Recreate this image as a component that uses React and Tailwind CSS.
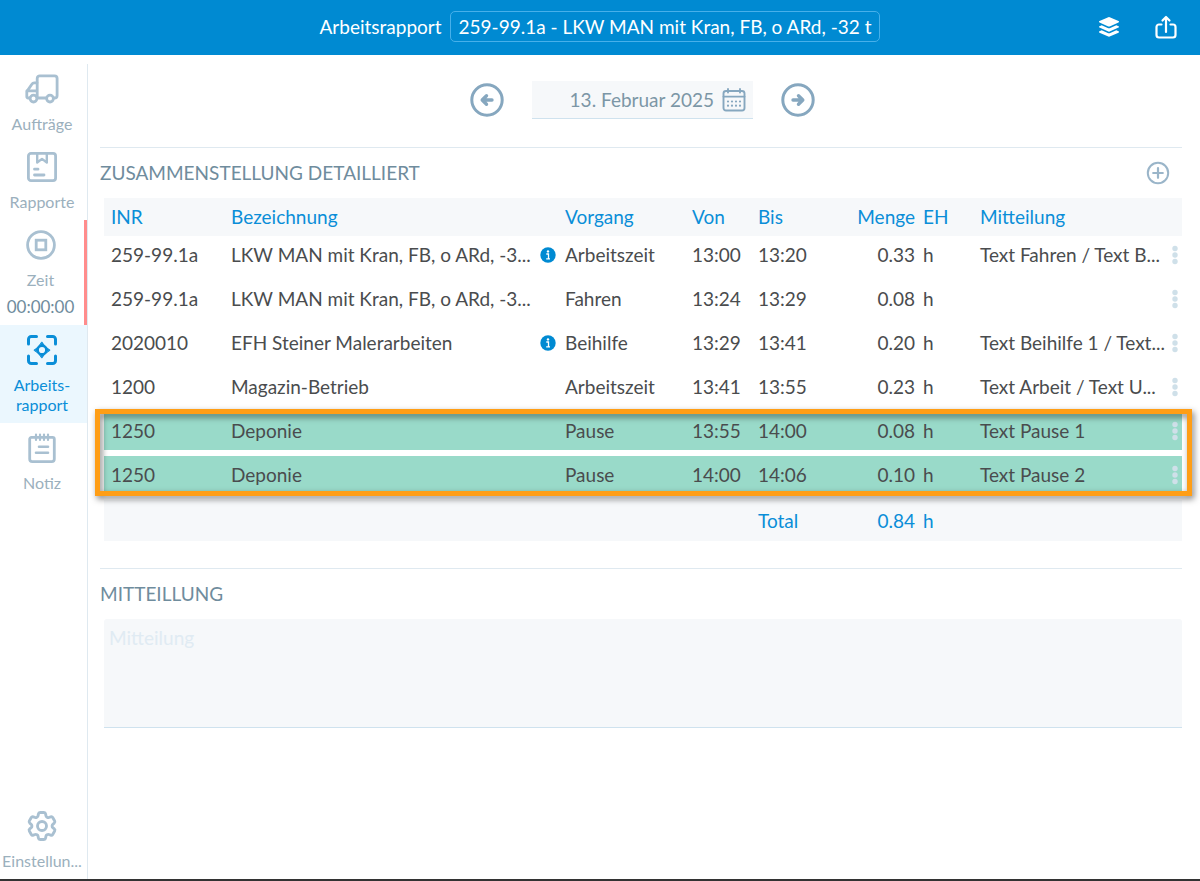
import React, { useState } from 'react';
import { HiOutlineCog6Tooth } from 'react-icons/hi2';

const TruckIcon = () => (
  <svg viewBox="0 0 34 30" className="w-[34px] h-[30px]" fill="none" stroke="currentColor" strokeWidth="2.8" strokeLinecap="round" strokeLinejoin="round">
    <path d="M4.500 24H3.200a1.400 1.400 0 0 1-1.400-1.400v-5L7 10a2.600 2.600 0 0 1 2.200-1.200H12" />
    <path d="M2 16.800h9" />
    <path d="M12.200 24V4.400a2.600 2.600 0 0 1 2.600-2.600h14.700a2.600 2.600 0 0 1 2.600 2.600v17a2.600 2.600 0 0 1-2.600 2.600h-.8M20.800 24h-8.400" />
    <circle cx="8.500" cy="24.600" r="3.400" />
    <circle cx="25" cy="24.600" r="3.400" />
  </svg>
);

const BoxIcon = () => (
  <svg viewBox="0 0 30 30" className="w-[30px] h-[30px]" fill="none" stroke="currentColor" strokeWidth="2.800" strokeLinecap="round" strokeLinejoin="round">
    <rect x="1.400" y="1.400" width="27.200" height="27.200" rx="2.600" />
    <path d="M10.200 1.500v9l4.800-3.600 4.800 3.600v-9" strokeWidth="2.400" />
    <path d="M7.500 17.200h3.500M7.500 23h9.500" />
  </svg>
);

const StopIcon = () => (
  <svg viewBox="0 0 30 30" className="w-[30px] h-[30px]" fill="none" stroke="currentColor" strokeWidth="2.800">
    <circle cx="15" cy="15" r="13.400" />
    <rect x="10.200" y="10.200" width="9.600" height="9.600" />
  </svg>
);

const ScanIcon = () => (
  <svg viewBox="0 0 30 30" className="w-[30px] h-[30px]" fill="none" stroke="currentColor" strokeWidth="3" strokeLinecap="round" strokeLinejoin="round">
    <path d="M1.500 9V4.300a2.800 2.800 0 0 1 2.800-2.800H9.500M20.500 1.500h5.200a2.800 2.800 0 0 1 2.800 2.800V9M28.500 21v4.700a2.800 2.800 0 0 1-2.800 2.800h-5.200M9.500 28.500H4.300a2.800 2.800 0 0 1-2.800-2.800V21" />
    <circle cx="15" cy="15" r="4.400" strokeWidth="2.600" />
    <path d="M15 7.200l2.600 3.600h-5.200zM15 22.800l2.600-3.600h-5.200zM7.200 15l3.600-2.600v5.200zM22.800 15l-3.600-2.600v5.200z" fill="currentColor" strokeWidth="1" />
  </svg>
);

const NoteIcon = () => (
  <svg viewBox="0 0 30 30" className="w-[30px] h-[30px]" fill="none" stroke="currentColor" strokeWidth="2.800" strokeLinecap="round" strokeLinejoin="round">
    <path d="M4.400 4.400h21.200a1.700 1.700 0 0 1 1.700 1.700v19.900a2.600 2.600 0 0 1-2.600 2.600H5.300a2.600 2.600 0 0 1-2.600-2.600v-19.900a1.700 1.700 0 0 1 1.700-1.700z" />
    <path d="M9 1.500v5.500M13 1.500v5.500M17 1.500v5.500M21 1.500v5.500" strokeWidth="2.200" />
    <path d="M12 13.800h9M9 19.800h12" strokeWidth="2.600" />
  </svg>
);

const LayersIcon = () => (
  <svg viewBox="0 0 22 22" className="w-[22px] h-[22px]" fill="currentColor">
    <path d="M10.300 1.200a1.800 1.800 0 0 1 1.400 0l8.800 3.900c.7.300.7 1.100 0 1.400l-8.800 3.900a1.800 1.800 0 0 1-1.400 0L1.500 6.500c-.7-.3-.7-1.100 0-1.400z" />
    <path d="M1.500 10.200l2.200-1 6 2.700a3.200 3.200 0 0 0 2.600 0l6-2.700 2.200 1c.7.300.7 1.100 0 1.400l-8.800 3.900a1.800 1.800 0 0 1-1.400 0l-8.800-3.900c-.7-.3-.7-1.100 0-1.400z" />
    <path d="M1.500 15.300l2.200-1 6 2.700a3.200 3.200 0 0 0 2.600 0l6-2.700 2.200 1c.7.300.7 1.100 0 1.400l-8.800 3.900a1.800 1.800 0 0 1-1.400 0l-8.800-3.900c-.7-.3-.7-1.100 0-1.400z" />
  </svg>
);

const ShareIcon = () => (
  <svg viewBox="0 0 22 24" className="w-[22px] h-[24px]" fill="none" stroke="currentColor" strokeWidth="2.200" strokeLinecap="round" strokeLinejoin="round">
    <path d="M6.500 9.500H4A2.500 2.500 0 0 0 1.500 12v8A2.500 2.500 0 0 0 4 22.500h14a2.500 2.500 0 0 0 2.500-2.500v-8A2.500 2.500 0 0 0 18 9.500h-2.500" />
    <path d="M11 17V2.500M7.500 5.500L11 2l3.500 3.500" />
  </svg>
);

const ArrowIcon = ({ flip }) => (
  <svg viewBox="0 0 34 34" className={flip ? 'w-[34px] h-[34px] rotate-180' : 'w-[34px] h-[34px]'} fill="none" stroke="currentColor" strokeWidth="3" strokeLinecap="round" strokeLinejoin="round">
    <circle cx="17" cy="17" r="15.200" />
    <path d="M22 17H12.500M16.500 12.700L12.200 17l4.300 4.300" strokeWidth="3.400" />
  </svg>
);

const CalendarIcon = () => (
  <svg viewBox="0 0 24 24" className="w-6 h-6" fill="none" stroke="currentColor" strokeWidth="1.900" strokeLinecap="round">
    <rect x="1.500" y="3" width="21" height="19.500" rx="2.500" />
    <path d="M1.500 8.600h21M6 1v3.500M18 1v3.500" />
    <path d="M6 13.500h.01M10 13.500h.01M14 13.500h.01M18 13.500h.01M6 17.700h.01M10 17.700h.01M14 17.700h.01M18 17.700h.01" strokeWidth="2.200" />
  </svg>
);

const PlusIcon = () => (
  <svg viewBox="0 0 24 24" className="w-6 h-6" fill="none" stroke="currentColor" strokeWidth="2" strokeLinecap="round">
    <circle cx="12" cy="12" r="10.200" />
    <path d="M12 7.200v9.600M7.200 12h9.600" strokeWidth="2.200" />
  </svg>
);

const InfoIcon = () => (
  <svg viewBox="0 0 16 16" className="w-4 h-4">
    <circle cx="8" cy="8" r="7.700" fill="#008ad2" />
    <circle cx="8" cy="4.400" r="1.200" fill="#fff" />
    <path d="M6.300 7h2.200v4.600M6.200 11.800h3.800" fill="none" stroke="#fff" strokeWidth="1.300" />
  </svg>
);

const DotsIcon = () => (
  <svg viewBox="0 0 6 20" className="w-[6px] h-5" fill="currentColor">
    <circle cx="3" cy="3.500" r="2.700" />
    <circle cx="3" cy="10" r="2.700" />
    <circle cx="3" cy="16.500" r="2.700" />
  </svg>
);

const NavItem = ({ icon, label, active, children }) => (
  <button
    className={
      active
        ? 'w-full flex flex-col items-center pt-[10px] pb-2 pr-[3px] bg-[#ebf7fe] text-[#0a8ed8]'
        : 'w-full flex flex-col items-center pt-[10px] pb-2 pr-[3px] text-[#a9c0d1]'
    }
  >
    {icon}
    <span className={active ? 'mt-[10px] text-[16px] leading-5' : 'mt-[10px] text-[16px] leading-5 text-[#9bb0bd]'}>{label}</span>
    {children}
  </button>
);

const entries = [
  { inr: '259-99.1a', name: 'LKW MAN mit Kran, FB, o ARd, -3...', info: true, type: 'Arbeitszeit', from: '13:00', to: '13:20', amount: '0.33', note: 'Text Fahren / Text B...' },
  { inr: '259-99.1a', name: 'LKW MAN mit Kran, FB, o ARd, -3...', type: 'Fahren', from: '13:24', to: '13:29', amount: '0.08', note: '' },
  { inr: '2020010', name: 'EFH Steiner Malerarbeiten', info: true, type: 'Beihilfe', from: '13:29', to: '13:41', amount: '0.20', note: 'Text Beihilfe 1 / Text...' },
  { inr: '1200', name: 'Magazin-Betrieb', type: 'Arbeitszeit', from: '13:41', to: '13:55', amount: '0.23', note: 'Text Arbeit / Text U...' },
  { inr: '1250', name: 'Deponie', type: 'Pause', from: '13:55', to: '14:00', amount: '0.08', note: 'Text Pause 1', pause: true },
  { inr: '1250', name: 'Deponie', type: 'Pause', from: '14:00', to: '14:06', amount: '0.10', note: 'Text Pause 2', pause: true },
];

const EntryTable = () => (
  <div className="relative ml-1">
    <table className="w-full table-fixed border-separate border-spacing-0 text-[19px] leading-6 text-[#4a4c4e] text-left whitespace-nowrap">
      <colgroup>
        <col className="w-[120px]" />
        <col />
        <col className="w-6" />
        <col className="w-[127px]" />
        <col className="w-[66px]" />
        <col className="w-[90px]" />
        <col className="w-[78px]" />
        <col className="w-[54px]" />
        <col className="w-[194px]" />
        <col className="w-[15px]" />
      </colgroup>
      <thead>
        <tr className="h-[38px] bg-[#f6f8fa] text-[#0a8ed8]">
          <th className="px-[7px] font-normal">INR</th>
          <th className="px-[7px] font-normal">Bezeichnung</th>
          <th />
          <th className="px-[7px] font-normal">Vorgang</th>
          <th className="px-[7px] font-normal">Von</th>
          <th className="px-[7px] font-normal">Bis</th>
          <th className="pr-1 font-normal">
            <div className="flex justify-end">Menge</div>
          </th>
          <th className="pl-1 font-normal">EH</th>
          <th className="px-[7px] font-normal">Mitteilung</th>
          <th />
        </tr>
      </thead>
      <tbody className="[&_td]:border-b-6 [&_td]:border-white">
        {entries.map((entry, i) => (
          <tr key={i} className={entry.pause ? 'h-11 bg-[#99dac9]' : 'h-11'}>
            <td className="px-[7px]">{entry.inr}</td>
            <td className="px-[7px]">{entry.name}</td>
            <td className="pl-[6px]">{entry.info && <InfoIcon />}</td>
            <td className="px-[7px]">{entry.type}</td>
            <td className="px-[7px]">{entry.from}</td>
            <td className="px-[7px]">{entry.to}</td>
            <td className="pr-1 text-right">{entry.amount}</td>
            <td className="pl-1">h</td>
            <td className="px-[7px]">{entry.note}</td>
            <td className="pl-[5px]">
              <button aria-label="Menü" className="block text-[#cfe0e9]">
                <DotsIcon />
              </button>
            </td>
          </tr>
        ))}
      </tbody>
      <tfoot>
        <tr className="h-[41px] bg-[#f6f8fa] text-[#0a8ed8]">
          <td colSpan={5} />
          <td className="px-[7px]">Total</td>
          <td className="pr-1 text-right">0.84</td>
          <td className="pl-1">h</td>
          <td colSpan={2} />
        </tr>
      </tfoot>
    </table>

    {/* Frame around the pause rows */}
    <div className="absolute -left-[9px] -right-[10px] top-[211px] h-[87px] border-5 border-[#ff9e16] drop-shadow-[2px_3px_3px_rgba(0,0,0,0.5)] pointer-events-none" />
  </div>
);

export default function App() {
  const [date, setDate] = useState('13. Februar 2025');
  const [message, setMessage] = useState('');

  return (
    <div className="min-h-screen flex flex-col bg-white border-b-2 border-[#333] font-[Lato,sans-serif]">
      <header className="h-[55px] pb-[2px] flex items-center bg-[#008ad2] text-white text-[19px] leading-6">
        <div className="w-[102px]" />
        <div className="flex-1 flex items-center justify-center gap-2">
          <h1>Arbeitsrapport</h1>
          <button className="h-[31px] px-2 rounded-[5px] border border-[#47b0ea]">
            259-99.1a - LKW MAN mit Kran, FB, o ARd, -32 t
          </button>
        </div>
        <div className="w-[102px] flex items-center gap-[35px]">
          <button aria-label="Ebenen">
            <LayersIcon />
          </button>
          <button aria-label="Teilen">
            <ShareIcon />
          </button>
        </div>
      </header>

      <div className="flex-1 flex">
        <nav className="w-[88px] shrink-0 flex flex-col mt-[9px] border-r border-[#dfe9f0]">
          <NavItem icon={<TruckIcon />} label="Aufträge" />
          <NavItem icon={<BoxIcon />} label="Rapporte" />
          {/* Red edge while the clock is stopped */}
          <div className="border-r-3 border-[#ff8c8c]">
            <NavItem icon={<StopIcon />} label="Zeit">
              <span className="mt-[7px] text-[17px] leading-5 text-[#6f8c9d]">00:00:00</span>
            </NavItem>
          </div>
          <NavItem
            active
            icon={<ScanIcon />}
            label={
              <>
                Arbeits-
                <br />
                rapport
              </>
            }
          />
          <NavItem icon={<NoteIcon />} label="Notiz" />
          <div className="mt-auto">
            <NavItem icon={<HiOutlineCog6Tooth className="w-[36px] h-[36px] -my-[3px]" strokeWidth={1.9} />} label="Einstellun..." />
          </div>
        </nav>

        <main className="flex-1 min-w-0">
          <div className="h-[92px] pb-[2px] pr-[3px] flex items-center justify-center gap-7 text-[#86a7bf]">
            <button aria-label="Vorheriger Tag">
              <ArrowIcon />
            </button>
            <div className="w-[221px] h-[38px] flex items-center pr-[7px] bg-[#f6f8fa] border-b border-[#cfe2ee]">
              <input
                aria-label="Datum"
                value={date}
                onChange={(e) => setDate(e.target.value)}
                className="flex-1 min-w-0 pr-2 text-right text-[19px] leading-6 text-[#7c96a6] bg-transparent outline-none"
              />
              <button aria-label="Kalender">
                <CalendarIcon />
              </button>
            </div>
            <button aria-label="Nächster Tag">
              <ArrowIcon flip />
            </button>
          </div>

          <div className="pl-3 pr-[18px]">
            <section className="border-t border-[#dfe9f0]">
              <div className="h-[50px] flex items-center justify-between pr-3">
                <h2 className="text-[19px] leading-6 text-[#6f8c9d]">ZUSAMMENSTELLUNG DETAILLIERT</h2>
                <button aria-label="Hinzufügen" className="text-[#9ab5c9]">
                  <PlusIcon />
                </button>
              </div>
              <EntryTable />
            </section>

            <section className="mt-[27px] border-t border-[#dfe9f0]">
              <h2 className="h-[50px] flex items-center text-[19px] leading-6 text-[#6f8c9d]">
                <label htmlFor="message">MITTEILLUNG</label>
              </h2>
              <div className="ml-1">
                <textarea
                  id="message"
                  placeholder="Mitteilung"
                  value={message}
                  onChange={(e) => setMessage(e.target.value)}
                  className="block w-full h-[109px] px-[5px] py-[7px] resize-none rounded-t-[3px] bg-[#f6f8fa] border-b border-[#cfe2ee] text-[19px] leading-6 text-[#4a4c4e] placeholder:text-[#e0ebf3] outline-none"
                />
              </div>
            </section>
          </div>
        </main>
      </div>
    </div>
  );
}
